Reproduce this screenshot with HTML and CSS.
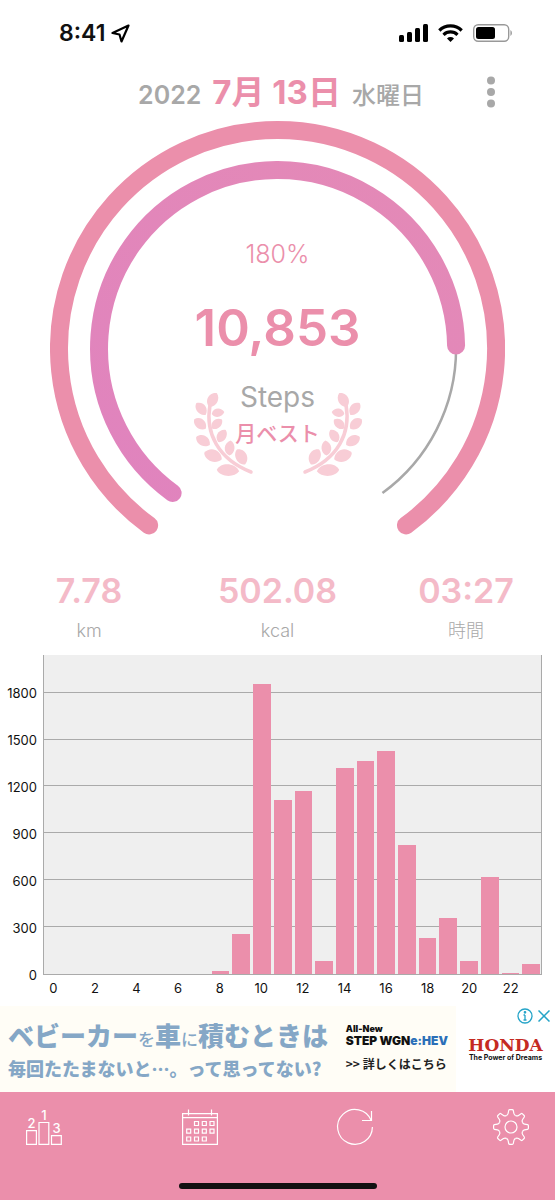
FILE: index.html
```html
<!DOCTYPE html>
<html lang="ja">
<head>
<meta charset="utf-8">
<meta name="viewport" content="width=device-width, initial-scale=1">
<title>歩数計</title>
<link rel="stylesheet" href="styles.css">
</head>
<body>
<div class="status">
  <div class="status-time">
    <span>8:41</span>
    <svg width="19" height="19" viewBox="0 0 19 19" fill="none" stroke="#000" stroke-width="2.2" stroke-linejoin="round"><path d="M17.500 1.500 1.500 9l7 1.500L10.500 17.500Z"/></svg>
  </div>
  <div class="status-icons">
    <svg width="29" height="18" viewBox="0 0 29 18"><rect x="0" y="11" width="5" height="7" rx="1.500"/><rect x="8" y="8" width="5" height="10" rx="1.500"/><rect x="16" y="4" width="5" height="14" rx="1.500"/><rect x="24" y="0" width="5" height="18" rx="1.500"/></svg>
    <svg width="25" height="18" viewBox="0 0 25 18" fill="none" stroke="#000" stroke-width="3.200"><path d="M1.300 6.500a16 16 0 0 1 22.400 0M5.500 10.800a10 10 0 0 1 14 0"/><path d="M12.500 18 9 14.500a5 5 0 0 1 7 0Z" fill="#000" stroke="none"/></svg>
    <svg width="40" height="18" viewBox="0 0 40 18"><rect x=".7" y=".7" width="35" height="16.600" rx="4.500" fill="none" stroke="#999" stroke-width="1.400"/><rect x="3" y="3" width="19" height="12" rx="2.500"/><path d="M37.500 6a4 4 0 0 1 0 6Z" fill="#888"/></svg>
  </div>
</div>

<header class="header">
  <h1 class="date"><span class="year">2022</span><span class="day">7月 13日</span><span class="weekday">水曜日</span></h1>
  <button class="more" aria-label="メニュー"><svg width="10" height="32" viewBox="0 0 10 32" fill="#a8a8a8"><circle cx="5" cy="4.500" r="4"/><circle cx="5" cy="16" r="4"/><circle cx="5" cy="27.500" r="4"/></svg></button>
</header>

<main>
  <section class="gauge">
    <svg class="rings" viewBox="0 0 455 414" fill="none" stroke-linecap="round">
      <defs><linearGradient id="ring" x1="0" y1="1" x2="1" y2="0"><stop offset="0" stop-color="#e083be"/><stop offset="1" stop-color="#e48ab6"/></linearGradient></defs>
      <path d="M99.100 404.300A218.500 218.500 0 1 1 355.900 404.300" stroke="#eb8fab" stroke-width="18"/>
      <path d="M406 227.500A178.500 178.500 0 0 1 332.400 371.900" stroke="#a8a8a8" stroke-width="2.500" stroke-linecap="butt"/>
      <path d="M122.600 371.900A178.500 178.500 0 1 1 406 224.500" stroke="url(#ring)" stroke-width="18"/>
    </svg>
    <div class="reading">
      <span class="percent">180%</span>
      <strong class="count">10,853</strong>
      <div class="award">
        <div class="laurels">
          <svg class="laurel" viewBox="0 0 60 84" fill="#f8cdd6">
            <defs>
              <path id="leaf" d="M-7.500 0C-5-7 4.500-7 7.500 0C4.500 6-5 6-7.500 0Z"/>
              <g id="branch">
                <path d="M16 12C11 40 24 66 57 79" fill="none" stroke="#f8cdd6" stroke-width="3.500" stroke-linecap="round"/>
                <use href="#leaf" transform="translate(19 7) rotate(-60) scale(1.050)"/>
                <use href="#leaf" transform="translate(7 16) rotate(52)"/>
                <use href="#leaf" transform="translate(24 20) rotate(-8) scale(.85)"/>
                <use href="#leaf" transform="translate(6 31) rotate(40)"/>
                <use href="#leaf" transform="translate(23 31) rotate(-42) scale(.9)"/>
                <use href="#leaf" transform="translate(9 48) rotate(30) scale(1.050)"/>
                <use href="#leaf" transform="translate(28 43) rotate(-58) scale(.95)"/>
                <use href="#leaf" transform="translate(19 63) rotate(20) scale(1.250)"/>
                <use href="#leaf" transform="translate(36 55) rotate(-85)"/>
                <use href="#leaf" transform="translate(47 64) rotate(62) scale(1.150)"/>
                <use href="#leaf" transform="translate(34 77.500) rotate(4) scale(1.500 1.200)"/>
              </g>
            </defs>
            <use href="#branch"/>
          </svg>
          <svg class="laurel" viewBox="0 0 60 84" fill="#f8cdd6"><use href="#branch" transform="translate(60 0) scale(-1 1)"/></svg>
        </div>
        <div class="award-text"><span class="unit">Steps</span><span class="best">月ベスト</span></div>
      </div>
    </div>
  </section>

  <dl class="stats">
    <div class="stat"><dd>7.78</dd><dt>km</dt></div>
    <div class="stat"><dd>502.08</dd><dt>kcal</dt></div>
    <div class="stat"><dd>03:27</dd><dt>時間</dt></div>
  </dl>

  <section class="chart" aria-label="時間別歩数">
    <div class="scale y-axis"><span></span><span>1800</span><span>1500</span><span>1200</span><span>900</span><span>600</span><span>300</span></div>
    <div class="plot">
      <div class="scale lines"><i></i><i></i><i></i><i></i><i></i><i></i><i></i></div>
      <div class="bars">
        <i></i><i></i><i></i><i></i><i></i><i></i><i></i><i></i>
        <i style="height:1.1%"></i><i style="height:12.7%"></i><i style="height:90.9%"></i><i style="height:54.7%"></i>
        <i style="height:57.4%"></i><i style="height:4.1%"></i><i style="height:64.7%"></i><i style="height:66.8%"></i>
        <i style="height:70%"></i><i style="height:40.5%"></i><i style="height:11.3%"></i><i style="height:17.5%"></i>
        <i style="height:4%"></i><i style="height:30.5%"></i><i style="height:.3%"></i><i style="height:3.1%"></i>
      </div>
    </div>
    <span class="zero">0</span>
    <div class="x-axis"><span>0</span><span>2</span><span>4</span><span>6</span><span>8</span><span>10</span><span>12</span><span>14</span><span>16</span><span>18</span><span>20</span><span>22</span></div>
  </section>
</main>

<aside class="ad">
  <div class="ad-main">
    <div class="ad-copy">
      <p class="ad-lead">ベビーカー<small>を</small>車<small>に</small>積むときは</p>
      <p class="ad-sub">毎回たたまないと…。って思ってない?</p>
    </div>
    <div class="ad-product">
      <span class="ad-new">All-New</span>
      <span class="ad-name">STEP WGN<em>e:HEV</em></span>
      <a class="ad-link" href="#">&gt;&gt; 詳しくはこちら</a>
    </div>
  </div>
  <div class="ad-side">
    <div class="ad-controls">
      <button aria-label="広告情報"><svg width="16" height="16" viewBox="0 0 16 16" fill="none" stroke="#25a4c8" stroke-width="1.300"><circle cx="8" cy="8" r="7"/><path d="M8 7v5M6.500 7H8M6.500 12h3" /><circle cx="8" cy="4.300" r=".7" fill="#25a4c8"/></svg></button>
      <button aria-label="広告を閉じる"><svg width="12" height="12" viewBox="0 0 12 12" stroke="#25a4c8" stroke-width="1.500"><path d="m.5.5 11 11M11.500.5l-11 11"/></svg></button>
    </div>
    <span class="ad-brand">HONDA</span>
    <span class="ad-slogan">The Power of Dreams</span>
  </div>
</aside>

<footer class="footer">
  <nav class="tabs">
    <button aria-label="ランキング"><svg viewBox="0 0 36 36"><path d="M.6 21.600h9.800v13.800H.6ZM13 13.500h9.800v21.900H13ZM25.500 26.600h9.800v8.800h-9.800Z"/><text x="5.500" y="19" text-anchor="middle">2</text><text x="18" y="11" text-anchor="middle">1</text><text x="30.500" y="24" text-anchor="middle">3</text></svg></button>
    <button aria-label="カレンダー"><svg viewBox="0 0 36 36"><path d="M.6 4.700h34.800v30.700H.6ZM.6 8.700h34.800M6.500.5v6M29.500.5v6"/><path d="M12.500 12.500h4v4h-4zM20.300 12.500h4v4h-4zM28 12.500h4v4h-4zM4.700 20.200h4v4h-4zM12.500 20.200h4v4h-4zM20.300 20.200h4v4h-4zM28 20.200h4v4h-4zM4.700 28h4v4h-4zM12.500 28h4v4h-4zM20.300 28h4v4h-4z"/></svg></button>
    <button aria-label="更新"><svg viewBox="0 0 36 36"><path d="M35.400 18A17.400 17.400 0 1 1 34.200 11.500M34.500 2v9.500H25"/></svg></button>
    <button aria-label="設定"><svg viewBox="0 0 36 36">
      <defs><path id="tooth" d="M-4.700-11.400Q-3.200-12-2.900-13.500L-2.300-16.500Q-2.100-17.400-1.200-17.400H1.200Q2.100-17.400 2.300-16.500L2.900-13.500Q3.200-12 4.700-11.400"/></defs>
      <g transform="translate(18 18)"><circle r="6"/><use href="#tooth"/><use href="#tooth" transform="rotate(45)"/><use href="#tooth" transform="rotate(90)"/><use href="#tooth" transform="rotate(135)"/><use href="#tooth" transform="rotate(180)"/><use href="#tooth" transform="rotate(225)"/><use href="#tooth" transform="rotate(270)"/><use href="#tooth" transform="rotate(315)"/></g></svg></button>
  </nav>
  <div class="home-bar"></div>
</footer>
</body>
</html>
```
FILE: styles.css
```css
* { box-sizing: border-box; }

body {
  margin: 0;
  background: #fff;
  color: #111;
  font-family: Inter, "Noto Sans CJK JP", sans-serif;
}

button {
  display: block;
  padding: 0;
  border: 0;
  background: none;
  cursor: pointer;
}

svg { display: block; }

.status {
  display: flex;
  justify-content: space-between;
  align-items: center;
  height: 66px;
  padding: 0 42px 0 59px;
}
.status-time {
  display: flex;
  align-items: center;
  gap: 6px;
  font-size: 23px;
  font-weight: 600;
}
.status-icons { display: flex; gap: 10px; }

.header {
  display: grid;
  grid-template-columns: 1fr auto 1fr;
  align-items: center;
  height: 55px;
  padding: 0 59px 4px;
}
.date {
  grid-column: 2;
  display: flex;
  align-items: baseline;
  gap: 11px;
  margin: 4px 0 0 7px;
  line-height: 36px;
  white-space: nowrap;
}
.year { color: #a8a8a8; font-size: 25px; font-weight: 600; }
.day { color: #eb8fab; font-size: 33px; font-weight: 700; }
.weekday { color: #a8a8a8; font-size: 24px; font-weight: 500; }
.more { justify-self: end; }

.gauge {
  display: grid;
  width: 82%;
  margin: 0 auto;
}
.rings, .reading { grid-area: 1 / 1; }
.rings { width: 100%; }
.reading {
  display: flex;
  flex-direction: column;
  align-items: center;
  padding-top: 117px;
}
.percent {
  margin-bottom: 28px;
  color: #eb8fab;
  font-size: 25px;
  font-weight: 300;
  line-height: 32px;
}
.count {
  margin-bottom: 22px;
  color: #eb8fab;
  font-size: 51px;
  font-weight: 600;
  line-height: 60px;
}
.award { display: grid; width: 168px; }
.laurels, .award-text { grid-area: 1 / 1; }
.laurels {
  display: flex;
  justify-content: space-between;
  padding-top: 13px;
}
.laurel { width: 60px; height: 84px; overflow: visible; }
.award-text {
  display: flex;
  flex-direction: column;
  align-items: center;
  gap: 5px;
}
.unit { color: #a8a8a8; font-size: 28px; line-height: 34px; }
.best { color: #eb8fab; font-size: 21px; font-weight: 500; line-height: 30px; }

.stats {
  display: flex;
  justify-content: space-between;
  margin: 36px 0 12px;
  padding: 0 31px;
  text-align: center;
}
.stat { min-width: 116px; }
.stat dd {
  margin: 0 0 8px;
  color: #f4bac8;
  font-size: 34px;
  font-weight: 600;
  line-height: 40px;
}
.stat dt {
  color: #a8a8a8;
  font-size: 18px;
  font-weight: 300;
  line-height: 24px;
}

.chart {
  display: grid;
  grid-template-columns: 37px 1fr;
  grid-template-rows: 320px 31px;
  column-gap: 6px;
  padding-right: 13px;
  font-size: 13px;
  line-height: 16px;
}
.scale {
  display: grid;
  grid-template-rows: 240fr repeat(6, 300fr);
}
.y-axis { text-align: right; }
.y-axis span { align-self: end; transform: translateY(50%); }
.y-axis { grid-template-rows: 0 240fr repeat(5, 300fr) 300fr; }
.plot {
  display: grid;
  border: solid #aaa;
  border-width: 0 1px 1px;
  background: #efefef;
}
.lines, .bars { grid-area: 1 / 1; min-height: 0; }
.lines i { border-bottom: 1px solid #aaa; }
.lines i:last-child { border: 0; }
.bars {
  display: grid;
  grid-template-columns: repeat(24, 1fr);
  align-items: end;
  height: 319px;
}
.bars i { margin: 0 1px 0 2px; background: #eb8fab; }
.zero {
  align-self: start;
  text-align: right;
  transform: translateY(-50%);
}
.x-axis {
  display: grid;
  grid-template-columns: repeat(12, 1fr);
  padding-top: 5px;
}
.x-axis span { width: 50%; text-align: center; }

.ad {
  display: flex;
  height: 86px;
  font-family: "Noto Sans CJK JP", sans-serif;
}
.ad p { margin: 0; white-space: nowrap; }
.ad-main {
  display: flex;
  flex: 0 0 456px;
  justify-content: space-between;
  padding: 13px 8px 0;
  background: #fffdf6;
}
.ad-copy { color: #85a7c6; font-weight: 900; }
.ad-lead { font-size: 26px; line-height: 32px; }
.ad-lead small { font-size: 17px; font-weight: 500; }
.ad-sub { font-size: 18px; line-height: 26px; }
.ad-product {
  display: flex;
  flex-direction: column;
  padding-top: 4px;
  white-space: nowrap;
}
.ad-new { font: 900 9px/11px Inter, sans-serif; }
.ad-name { font: 900 12px/14px Inter, sans-serif; }
.ad-name em { color: #2b6fb8; font-style: normal; }
.ad-link {
  margin-top: 6px;
  color: #222;
  font-size: 12px;
  font-weight: 700;
  line-height: 20px;
  text-decoration: none;
}
.ad-side {
  display: flex;
  flex: 1;
  flex-direction: column;
  align-items: center;
  white-space: nowrap;
}
.ad-controls {
  display: flex;
  align-items: center;
  align-self: flex-end;
  gap: 5px;
  margin-bottom: 12px;
  padding: 2px 5px 0 0;
}
.ad-brand {
  color: #c52a22;
  font: 700 17px/18px "DejaVu Serif", serif;
}
.ad-slogan { font: 700 7px/8px Inter, sans-serif; }

.footer {
  display: flex;
  flex-direction: column;
  justify-content: space-between;
  align-items: center;
  height: 108px;
  padding: 17px 26px 11px;
  background: #eb8fab;
}
.tabs {
  display: flex;
  justify-content: space-between;
  width: 100%;
}
.tabs svg {
  width: 36px;
  height: 36px;
  overflow: visible;
  fill: none;
  stroke: #fff;
  stroke-width: 1.2px;
}
.tabs text {
  fill: #fff;
  stroke: none;
  font: 500 13px Inter, sans-serif;
}
.home-bar {
  width: 198px;
  height: 6px;
  border-radius: 3px;
  background: #111;
}
```
